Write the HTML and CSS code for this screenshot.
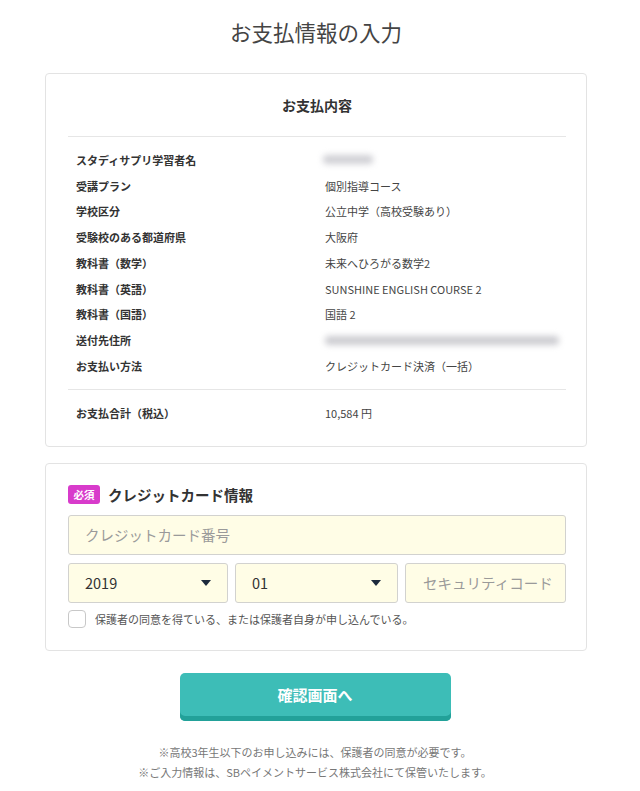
FILE: index.html
```html
<!DOCTYPE html>
<html lang="ja">
<head>
<meta charset="utf-8">
<link rel="stylesheet" href="styles.css">
</head>
<body>
<div class="page">
  <h1 class="page-title">お支払情報の入力</h1>

  <section class="card summary">
    <h2 class="card-title">お支払内容</h2>
    <div class="rows">
      <div class="row"><span class="label">スタディサプリ学習者名</span><span class="value"><span class="blur blur-name"></span></span></div>
      <div class="row"><span class="label">受講プラン</span><span class="value">個別指導コース</span></div>
      <div class="row"><span class="label">学校区分</span><span class="value">公立中学（高校受験あり）</span></div>
      <div class="row"><span class="label">受験校のある都道府県</span><span class="value">大阪府</span></div>
      <div class="row"><span class="label">教科書（数学）</span><span class="value">未来へひろがる数学2</span></div>
      <div class="row"><span class="label">教科書（英語）</span><span class="value">SUNSHINE ENGLISH COURSE 2</span></div>
      <div class="row"><span class="label">教科書（国語）</span><span class="value">国語 2</span></div>
      <div class="row"><span class="label">送付先住所</span><span class="value"><span class="blur blur-addr"></span></span></div>
      <div class="row"><span class="label">お支払い方法</span><span class="value">クレジットカード決済（一括）</span></div>
    </div>
    <div class="rows total">
      <div class="row"><span class="label">お支払合計（税込）</span><span class="value">10,584 円</span></div>
    </div>
  </section>

  <section class="card payment">
    <div class="pay-head"><span class="badge">必須</span><span class="pay-title">クレジットカード情報</span></div>
    <div class="field field-full"><span class="placeholder">クレジットカード番号</span></div>
    <div class="field-row">
      <div class="field select"><span class="sel-val">2019</span><span class="arrow"></span></div>
      <div class="field select"><span class="sel-val">01</span><span class="arrow"></span></div>
      <div class="field"><span class="placeholder">セキュリティコード</span></div>
    </div>
    <label class="agree"><span class="checkbox"></span><span class="agree-text">保護者の同意を得ている、または保護者自身が申し込んでいる。</span></label>
  </section>

  <div class="actions"><button class="btn">確認画面へ</button></div>

  <div class="notes">
    <p>※高校3年生以下のお申し込みには、保護者の同意が必要です。</p>
    <p>※ご入力情報は、SBペイメントサービス株式会社にて保管いたします。</p>
  </div>
</div>
</body>
</html>
```

FILE: styles.css
```css
* { box-sizing: border-box; }
html, body { margin: 0; padding: 0; background: #fff; }
body {
  font-family: "Noto Sans CJK JP", "Noto Sans", sans-serif;
  color: #333;
}
.page {
  width: 542px;
  margin-left: 45px;
  padding-top: 17px;
}
.page-title {
  margin: 0;
  font-size: 21.5px;
  font-weight: 400;
  line-height: 30px;
  text-align: center;
  color: #444;
}
.card {
  border: 1px solid #e3e3e3;
  border-radius: 4px;
  background: #fff;
}
.summary {
  margin-top: 26px;
  padding: 21px 20px 20px 22px;
}
.card-title {
  margin: 0;
  font-size: 14px;
  font-weight: 700;
  line-height: 20px;
  text-align: center;
  color: #333;
  padding-bottom: 21px;
  border-bottom: 1px solid #e6e6e6;
}
.rows {
  padding: 10px 0 10px;
}
.rows.total {
  border-top: 1px solid #e6e6e6;
  padding: 10px 0 0;
}
.row {
  display: flex;
  height: 25.75px;
  align-items: center;
  font-size: 11px;
}
.label {
  width: 257px;
  padding-left: 8px;
  font-weight: 700;
  color: #333;
}
.value {
  color: #444;
  display: flex;
  align-items: center;
}
.blur {
  display: inline-block;
  height: 9px;
  background: #cfcfd4;
  border-radius: 4px;
  filter: blur(3px);
}
.blur-name { width: 50px; margin-left: -2px; }
.blur-addr { width: 234px; background: #cbcbd0; }

.payment {
  margin-top: 16px;
  padding: 22px 20px 22px 22px;
}
.pay-head {
  display: flex;
  align-items: center;
  height: 18px;
}
.badge {
  display: inline-flex;
  align-items: center;
  justify-content: center;
  width: 32px;
  height: 19px;
  border-radius: 3px;
  background: #d83bcb;
  color: #fff;
  font-size: 10.5px;
  font-weight: 700;
}
.pay-title {
  margin-left: 8px;
  font-size: 14.5px;
  font-weight: 700;
  color: #333;
}
.field {
  height: 40px;
  border: 1px solid #d2d2cf;
  border-radius: 3px;
  background: #fffde6;
  display: flex;
  align-items: center;
  padding: 0 16px;
  font-size: 14.5px;
}
.field-full { margin-top: 11px; }
.placeholder { color: #9a9a9a; white-space: nowrap; }
.field-row {
  margin-top: 8px;
  display: grid;
  grid-template-columns: 160px 163px 1fr;
  gap: 7px;
}
.field-row .field:last-child { padding: 0 12px 0 17px; }
.select { justify-content: space-between; }
.sel-val { color: #333; }
.arrow {
  width: 0; height: 0;
  border-left: 5px solid transparent;
  border-right: 5px solid transparent;
  border-top: 6px solid #1c2a3c;
}
.agree {
  display: flex;
  align-items: center;
  margin-top: 7px;
  height: 18px;
}
.checkbox {
  width: 18px;
  height: 18px;
  border: 1px solid #c8c8c8;
  border-radius: 4px;
  background: #fff;
}
.agree-text {
  margin-left: 9px;
  font-size: 11px;
  color: #555;
}
.actions {
  display: flex;
  justify-content: center;
  margin-top: 22px;
  padding-right: 2px;
}
.btn {
  width: 271px;
  height: 48px;
  border: 0;
  border-radius: 5px;
  background: #3dbdb7;
  box-shadow: inset 0 -5px 0 #22a199;
  color: #fff;
  font-family: inherit;
  font-size: 15px;
  font-weight: 700;
  padding: 0 0 5px;
}
.notes {
  margin-top: 21px;
  text-align: center;
  font-size: 11px;
  color: #777;
  line-height: 20px;
  padding-right: 2px;
}
.notes p { margin: 0; }
```
